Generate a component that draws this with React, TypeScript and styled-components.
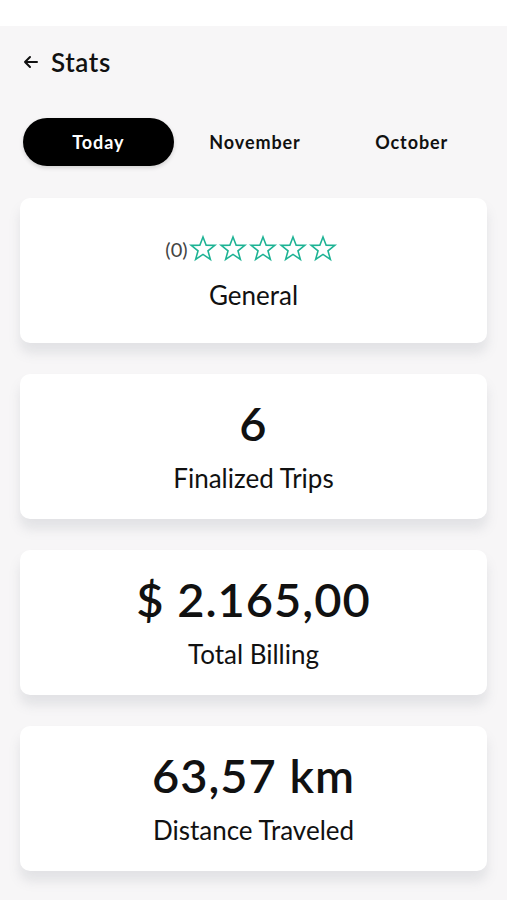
import React, { useState } from "react";
import styled, { createGlobalStyle } from "styled-components";

const GlobalStyle = createGlobalStyle`
  body {
    margin: 0;
    background: #ffffff;
    font-family: Lato, "Noto Sans", sans-serif;
    color: #111;
  }
`;

const StatusBar = styled.div`
  height: 26px;
  background: #ffffff;
`;

const Screen = styled.div`
  background: #f7f6f7;
  min-height: 874px;
  padding: 0 20px 20px;
`;

const Header = styled.div`
  display: flex;
  align-items: center;
  gap: 12px;
  height: 72px;
  padding-left: 3px;
`;

const BackButton = styled.button`
  display: flex;
  align-items: center;
  border: 0;
  background: none;
  padding: 0;
  cursor: pointer;
`;

const Title = styled.h1`
  margin: 0;
  font-size: 26px;
  font-weight: 600;
  letter-spacing: 0.6px;
`;

const Tabs = styled.div`
  display: grid;
  grid-template-columns: repeat(3, 1fr);
  gap: 6px;
  margin-top: 20px;
  margin-bottom: 32px;
  padding-left: 3px;
`;

const Tab = styled.button<{ $active: boolean }>`
  height: 48px;
  border: 0;
  border-radius: 24px;
  font-family: inherit;
  font-size: 18px;
  font-weight: 700;
  letter-spacing: 0.9px;
  cursor: pointer;
  background: ${(p) => (p.$active ? "#000" : "transparent")};
  color: ${(p) => (p.$active ? "#fff" : "#111")};
  box-shadow: ${(p) => (p.$active ? "0 2px 4px rgba(0,0,0,0.15)" : "none")};
`;

const CardList = styled.div`
  display: flex;
  flex-direction: column;
  gap: 31px;
`;

const Card = styled.div`
  background: #fff;
  border-radius: 10px;
  height: 145px;
  display: flex;
  flex-direction: column;
  align-items: center;
  justify-content: center;
  gap: 18px;
  box-shadow: 0 10px 12px rgba(120, 125, 135, 0.16);
`;

const Value = styled.div`
  font-size: 47px;
  font-weight: 600;
  line-height: 44px;
  letter-spacing: 1px;
`;

const Label = styled.div`
  font-size: 26px;
  line-height: 30px;
`;

const RatingRow = styled.div`
  display: flex;
  align-items: center;
  height: 34px;
  margin-right: 4px;
  margin-bottom: -4px;
`;

const RatingCount = styled.span`
  font-size: 20px;
  color: #444;
  margin-right: 0;
`;

const Star = () => (
  <svg width="30" height="29" viewBox="0 0 24 24" fill="none" stroke="#1db394" strokeWidth="1.3" strokeLinejoin="miter">
    <polygon points="12,2.5 14.6,9.3 21.8,9.4 16.1,13.9 18.1,21 12,16.9 5.9,21 7.9,13.9 2.2,9.4 9.4,9.3" />
  </svg>
);

const BackArrow = () => (
  <svg width="16" height="14" viewBox="0 0 16 14" fill="none" stroke="#111" strokeWidth="2" strokeLinecap="round" strokeLinejoin="round">
    <path d="M14 7H2M7 2L2 7l5 5" />
  </svg>
);

const stats = [
  { value: "6", label: "Finalized Trips" },
  { value: "$ 2.165,00", label: "Total Billing" },
  { value: "63,57 km", label: "Distance Traveled" },
];

export default function App() {
  const [tab, setTab] = useState("Today");

  return (
    <>
      <GlobalStyle />
      <StatusBar />
      <Screen>
        <Header>
          <BackButton aria-label="back">
            <BackArrow />
          </BackButton>
          <Title>Stats</Title>
        </Header>
        <Tabs>
          {["Today", "November", "October"].map((t) => (
            <Tab key={t} $active={t === tab} onClick={() => setTab(t)}>
              {t}
            </Tab>
          ))}
        </Tabs>
        <CardList>
          <Card>
            <RatingRow>
              <RatingCount>(0)</RatingCount>
              {[0, 1, 2, 3, 4].map((i) => (
                <Star key={i} />
              ))}
            </RatingRow>
            <Label>General</Label>
          </Card>
          {stats.map((s) => (
            <Card key={s.label}>
              <Value>{s.value}</Value>
              <Label>{s.label}</Label>
            </Card>
          ))}
        </CardList>
      </Screen>
    </>
  );
}
